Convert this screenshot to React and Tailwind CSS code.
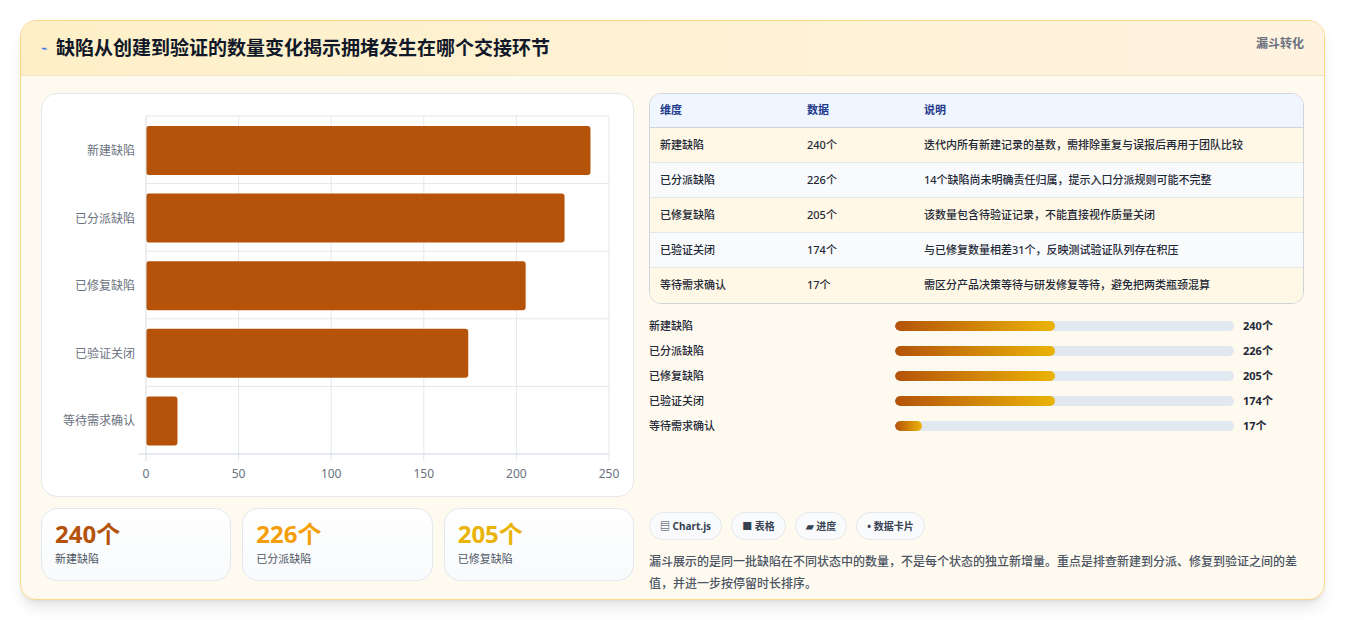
export default function App() {
  const cats = ["新建缺陷", "已分派缺陷", "已修复缺陷", "已验证关闭", "等待需求确认"];
  const vals = [240, 226, 205, 174, 17];
  const rows = [
    ["新建缺陷", "240个", "迭代内所有新建记录的基数，需排除重复与误报后再用于团队比较"],
    ["已分派缺陷", "226个", "14个缺陷尚未明确责任归属，提示入口分派规则可能不完整"],
    ["已修复缺陷", "205个", "该数量包含待验证记录，不能直接视作质量关闭"],
    ["已验证关闭", "174个", "与已修复数量相差31个，反映测试验证队列存在积压"],
    ["等待需求确认", "17个", "需区分产品决策等待与研发修复等待，避免把两类瓶颈混算"],
  ];
  const pw = [160, 160, 160, 160, 27];
  const x0 = 144, sx = 463 / 250, top = 115, band = 67.6;
  return (
    <div className="w-[1345px] h-[620px] bg-white p-5" style={{ fontFamily: '"Noto Sans","Noto Sans CJK SC",sans-serif' }}>
      <div className="h-[580px] rounded-2xl border border-[#fcd98a] bg-[#fffaf0] shadow-lg overflow-hidden flex flex-col">
        <div className="h-[55px] shrink-0 flex items-center justify-between px-5 bg-gradient-to-r from-[#fdf0c8] to-[#fff3e0] border-b border-[#f3e6c8]">
          <div className="flex items-center gap-2">
            <span className="text-[#2563eb] text-[11px]">⌁</span>
            <span className="text-[19px] font-bold text-[#111827]">缺陷从创建到验证的数量变化揭示拥堵发生在哪个交接环节</span>
          </div>
          <span className="text-[12px] font-bold text-[#6b7280] -mt-2">漏斗转化</span>
        </div>
        <div className="flex gap-[15px] px-5 pt-[17px]">
          <div className="w-[593px] flex flex-col gap-[11px]">
            <div className="h-[404px] rounded-2xl border border-[#e5e7eb] bg-white relative">
              <svg width="593" height="404" className="absolute left-0 top-0">
                <g transform="translate(-40,-93)">
                  {[0, 50, 100, 150, 200, 250].map((t) => (
                    <g key={t}>
                      <line x1={x0 + t * sx} x2={x0 + t * sx} y1={top} y2={460} stroke="#e5e7eb" />
                      <text x={x0 + t * sx} y={477} textAnchor="middle" fontSize="12" fill="#6b7280">{t}</text>
                    </g>
                  ))}
                  {cats.map((c, i) => (
                    <g key={c}>
                      <line x1={x0} x2={607} y1={top + i * band} y2={top + i * band} stroke="#e5e7eb" />
                      <rect x={x0} y={top + i * band + 10} width={vals[i] * sx} height={49} rx="3" fill="#b45309" />
                      <text x={133} y={top + i * band + 39} textAnchor="end" fontSize="12" fill="#6b7280">{c}</text>
                    </g>
                  ))}
                  <line x1={136} x2={607} y1={453} y2={453} stroke="#cbd5e1" />
                  <line x1={x0} x2={x0} y1={top} y2={460} stroke="#e5e7eb" />
                </g>
              </svg>
            </div>
            <div className="grid grid-cols-3 gap-[11px]">
              {[["240个", "#b45309", "新建缺陷"], ["226个", "#f59e0b", "已分派缺陷"], ["205个", "#eab308", "已修复缺陷"]].map(([v, c, l]) => (
                <div key={l} className="h-[73px] rounded-2xl border border-[#e2e8f0] bg-gradient-to-b from-white to-[#f8fafc] px-[13px] pt-[10px]">
                  <div className="text-[24px] font-bold leading-[30px]" style={{ color: c }}>{v}</div>
                  <div className="text-[11px] text-[#4b5563] mt-[2px]">{l}</div>
                </div>
              ))}
            </div>
          </div>
          <div className="flex-1 flex flex-col">
            <div className="rounded-xl border border-[#d1d5db] overflow-hidden text-[11px]">
              <div className="flex h-[34px] items-center bg-[#eff6ff] border-b border-[#d1d5db] font-bold text-[#1e3a8a]">
                <div className="w-[157px] pl-[10px]">维度</div>
                <div className="w-[117px]">数据</div>
                <div>说明</div>
              </div>
              {rows.map((r, i) => (
                <div key={r[0]} className={`flex h-[35px] items-center font-medium text-[#1f2937] ${i < 4 ? "border-b border-[#e5e7eb]" : ""} ${i % 2 ? "bg-[#f8fafc]" : "bg-[#fff8e6]"}`}>
                  <div className="w-[157px] pl-[10px]">{r[0]}</div>
                  <div className="w-[117px]">{r[1]}</div>
                  <div>{r[2]}</div>
                </div>
              ))}
            </div>
            <div className="mt-[13px] flex flex-col gap-[7px]">
              {cats.map((c, i) => (
                <div key={c} className="flex items-center h-[18px] text-[11px] font-medium text-[#1f2937]">
                  <div className="w-[246px]">{c}</div>
                  <div className="w-[339px] h-[10px] rounded-full bg-[#e2e8f0] overflow-hidden">
                    <div className="h-full rounded-full bg-gradient-to-r from-[#b45309] to-[#eab308]" style={{ width: pw[i] }} />
                  </div>
                  <div className="ml-[9px] font-bold">{vals[i]}个</div>
                </div>
              ))}
            </div>
            <div className="mt-[77px] flex gap-[9px] text-[10px] font-bold text-[#374151]">
              {["▤ Chart.js", "■ 表格", "▰ 进度", "• 数据卡片"].map((t) => (
                <div key={t} className="h-[28px] px-[10px] flex items-center rounded-full border border-[#e5e7eb] bg-[#f8fafc]">{t}</div>
              ))}
            </div>
            <p className="mt-[11px] text-[12px] leading-[22px] text-[#4b5563] font-medium">漏斗展示的是同一批缺陷在不同状态中的数量，不是每个状态的独立新增量。重点是排查新建到分派、修复到验证之间的差值，并进一步按停留时长排序。</p>
          </div>
        </div>
      </div>
    </div>
  );
}
